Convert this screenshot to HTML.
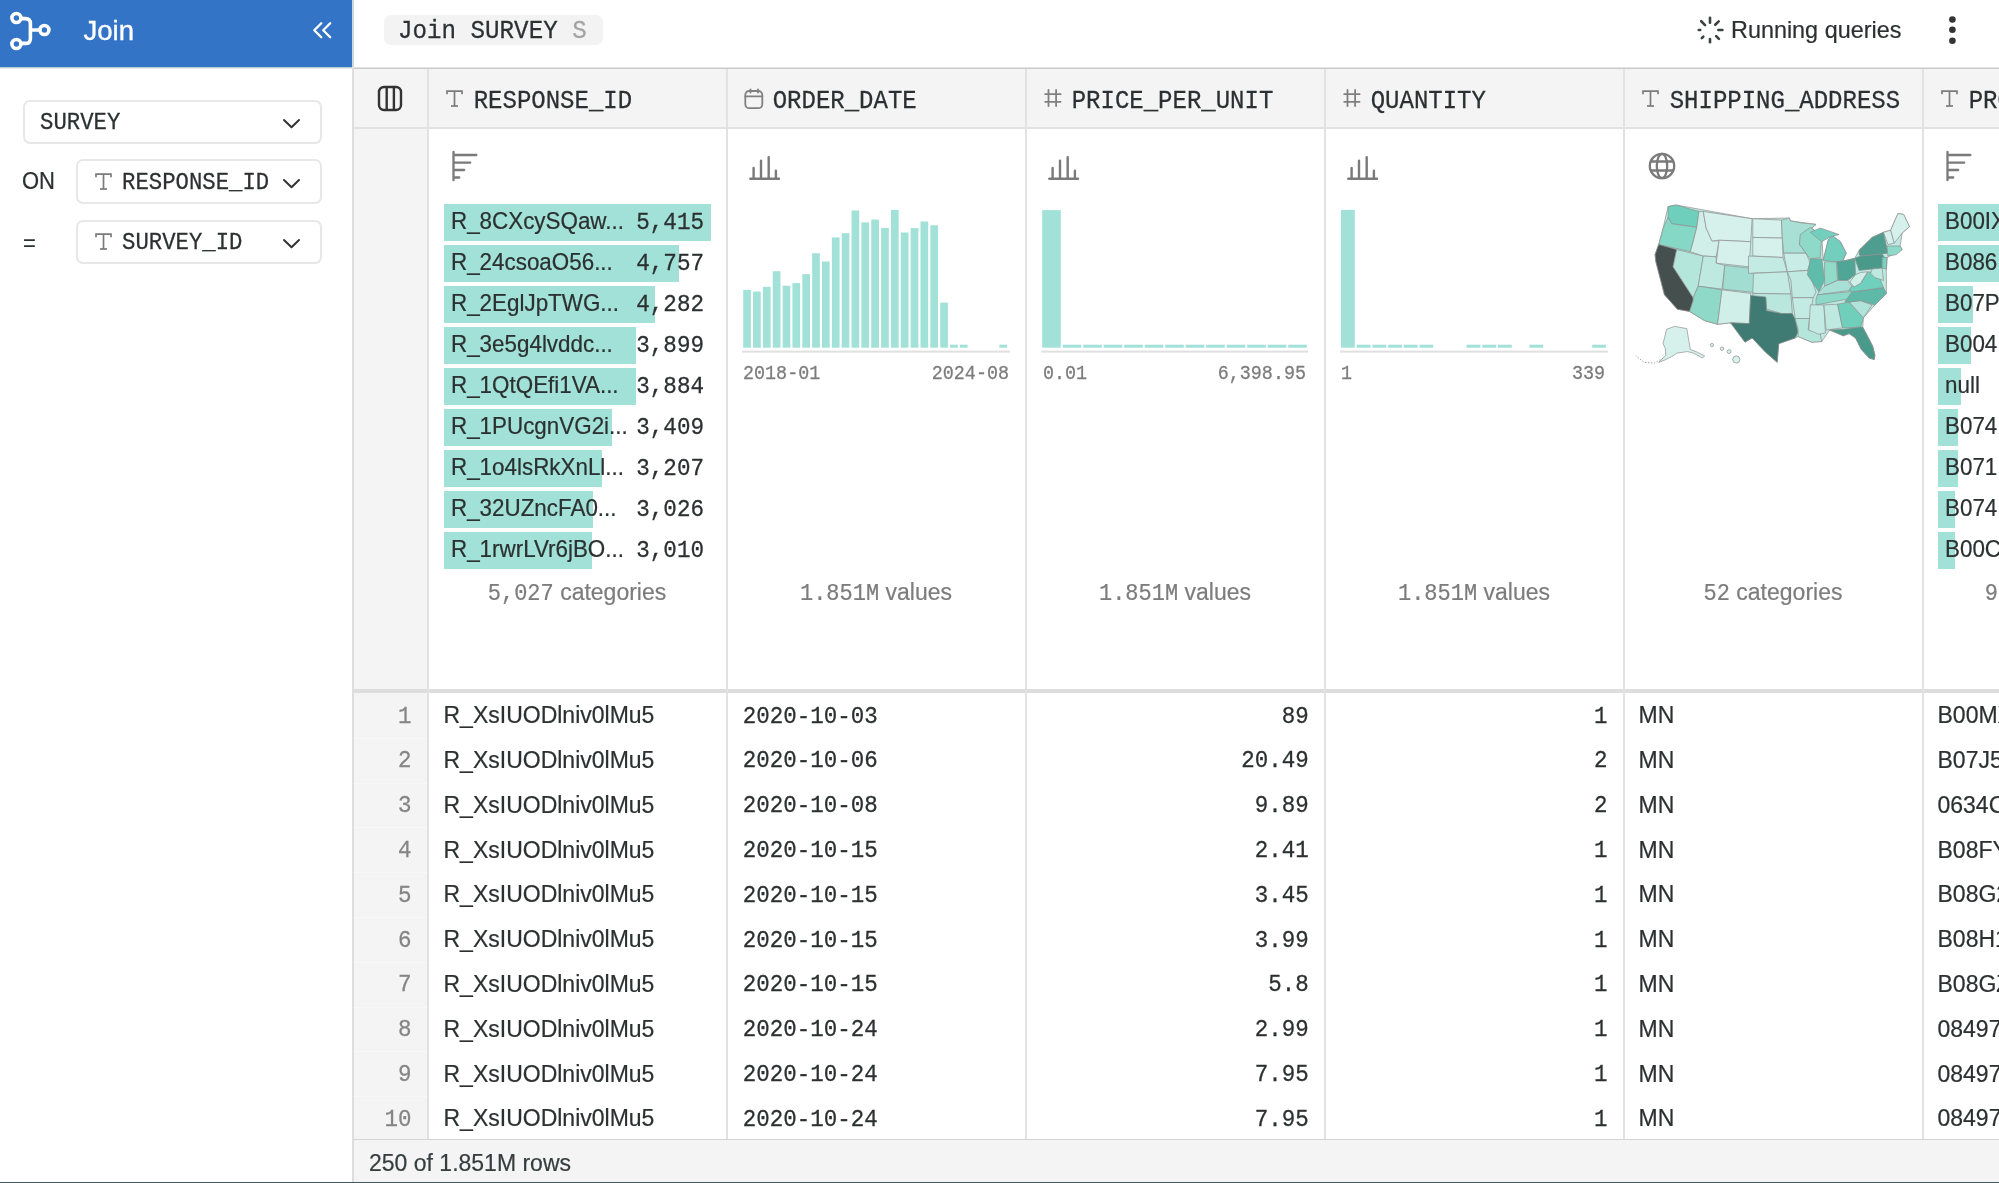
<!DOCTYPE html>
<html><head><meta charset="utf-8"><style>
html,body{margin:0;padding:0;}
body{width:1999px;height:1183px;overflow:hidden;position:relative;background:#fff;font-family:'Liberation Sans', sans-serif;}
.t{position:absolute;white-space:pre;}
.r{position:absolute;}
.s{position:absolute;overflow:visible;}
#root{position:absolute;left:0;top:0;width:1999px;height:1183px;overflow:hidden;will-change:transform;}
</style></head><body><div id="root">
<div class="r" style="left:0px;top:0px;width:352px;height:67px;background:#3474c6;"></div>
<div class="r" style="left:0px;top:67px;width:352px;height:1px;background:#b9d6d6;"></div>
<div class="r" style="left:0px;top:68px;width:352px;height:1px;background:#e6e6e6;"></div>
<div class="r" style="left:352px;top:67px;width:1647px;height:1px;background:#e4e4e4;"></div>
<div class="r" style="left:352px;top:68px;width:1647px;height:1px;background:#cacaca;"></div>
<div class="r" style="left:354px;top:69px;width:1645px;height:58px;background:#f4f4f4;"></div>
<div class="r" style="left:354px;top:127px;width:1645px;height:2px;background:#e2e2e2;"></div>
<div class="r" style="left:354px;top:129px;width:73px;height:1010px;background:#f4f4f4;"></div>
<div class="r" style="left:352px;top:68px;width:2px;height:1115px;background:#dedede;"></div>
<div class="r" style="left:352px;top:0px;width:1px;height:67px;background:#d6d6d6;"></div>
<div class="r" style="left:353px;top:0px;width:1px;height:67px;background:#bcdada;"></div>
<div class="r" style="left:354px;top:689px;width:1645px;height:4px;background:#dddddd;"></div>
<div class="r" style="left:427px;top:69px;width:2px;height:1070px;background:#e2e2e2;"></div>
<div class="r" style="left:726px;top:69px;width:2px;height:1070px;background:#e2e2e2;"></div>
<div class="r" style="left:1025px;top:69px;width:2px;height:1070px;background:#e2e2e2;"></div>
<div class="r" style="left:1324px;top:69px;width:2px;height:1070px;background:#e2e2e2;"></div>
<div class="r" style="left:1623px;top:69px;width:2px;height:1070px;background:#e2e2e2;"></div>
<div class="r" style="left:1922px;top:69px;width:2px;height:1070px;background:#e2e2e2;"></div>
<div class="r" style="left:354px;top:1139px;width:1645px;height:1px;background:#d4d4d4;"></div>
<div class="r" style="left:354px;top:1140px;width:1645px;height:42px;background:#f4f4f4;"></div>
<div class="r" style="left:0px;top:1182px;width:1999px;height:1px;background:#3e5960;"></div>
<svg class="s" style="left:0px;top:0px;" width="60" height="60" viewBox="0 0 60 60"><g fill="none" stroke="#fff" stroke-width="3.6" stroke-linecap="round"><circle cx="16.4" cy="18" r="4.5"/><circle cx="16.4" cy="44" r="4.5"/><circle cx="44.4" cy="30" r="4.5"/><path d="M21,18.6 H25.4 Q30.4,18.6 30.4,23.6 V38.4 Q30.4,43.4 25.4,43.4 H21 M30.4,30 H39.8"/></g></svg>
<div class="t" style="top:17.03px;font-size:27.6px;line-height:27.6px;font-family:'Liberation Sans', sans-serif;color:#ffffff;left:83.40px;-webkit-text-stroke:0.2px currentColor;transform:scaleY(1.05);transform-origin:0 23.37px;-webkit-text-stroke:0.35px #fff;transform:none;">Join</div>
<svg class="s" style="left:300px;top:15px;" width="40" height="30" viewBox="0 0 40 30"><g fill="none" stroke="#fff" stroke-width="2.3" stroke-linecap="round" stroke-linejoin="round"><path d="M21.3,8.2 L14.3,15.2 L21.3,22.2 M30.2,8.2 L23.2,15.2 L30.2,22.2"/></g></svg>
<div class="r" style="left:23px;top:100px;width:295px;height:40px;border:2px solid #e7e7e7;border-radius:7px;background:#fff"></div>
<div class="t" style="top:112.42px;font-size:22.3px;line-height:22.3px;font-family:'Liberation Mono', monospace;color:#2b3030;left:40.00px;transform:scaleY(1.08);transform-origin:0 17.08px;-webkit-text-stroke:0.25px currentColor;">SURVEY</div>
<svg class="s" style="left:281px;top:117px;" width="21" height="13" viewBox="0 0 21 13"><path d="M3,3 L10.5,10.2 L18,3" fill="none" stroke="#333" stroke-width="2" stroke-linecap="round" stroke-linejoin="round"/></svg>
<div class="t" style="top:171.17px;font-size:22px;line-height:22px;font-family:'Liberation Sans', sans-serif;color:#2b3030;left:22.00px;-webkit-text-stroke:0.2px currentColor;transform:scaleY(1.05);transform-origin:0 18.63px;">ON</div>
<div class="r" style="left:76px;top:159px;width:242px;height:41px;border:2px solid #e7e7e7;border-radius:7px;background:#fff"></div>
<svg class="s" style="left:94.5px;top:173px;" width="17" height="17" viewBox="0 0 17 17"><g fill="none" stroke="#7b7b7b" stroke-width="1.7"><path d="M1,4.2 V1.2 H16 V4.2"/><path d="M8.5,1.2 V16"/><path d="M5,16 H12"/></g></svg>
<div class="t" style="top:171.92px;font-size:22.3px;line-height:22.3px;font-family:'Liberation Mono', monospace;color:#2b3030;left:122.00px;transform:scaleY(1.08);transform-origin:0 17.08px;-webkit-text-stroke:0.25px currentColor;">RESPONSE_ID</div>
<svg class="s" style="left:281px;top:177px;" width="21" height="13" viewBox="0 0 21 13"><path d="M3,3 L10.5,10.2 L18,3" fill="none" stroke="#333" stroke-width="2" stroke-linecap="round" stroke-linejoin="round"/></svg>
<div class="t" style="top:233.17px;font-size:22px;line-height:22px;font-family:'Liberation Sans', sans-serif;color:#2b3030;left:23.00px;-webkit-text-stroke:0.2px currentColor;transform:scaleY(1.05);transform-origin:0 18.63px;">=</div>
<div class="r" style="left:76px;top:220px;width:242px;height:40px;border:2px solid #e7e7e7;border-radius:7px;background:#fff"></div>
<svg class="s" style="left:94.5px;top:233px;" width="17" height="17" viewBox="0 0 17 17"><g fill="none" stroke="#7b7b7b" stroke-width="1.7"><path d="M1,4.2 V1.2 H16 V4.2"/><path d="M8.5,1.2 V16"/><path d="M5,16 H12"/></g></svg>
<div class="t" style="top:232.22px;font-size:22.3px;line-height:22.3px;font-family:'Liberation Mono', monospace;color:#2b3030;left:122.00px;transform:scaleY(1.08);transform-origin:0 17.08px;-webkit-text-stroke:0.25px currentColor;">SURVEY_ID</div>
<svg class="s" style="left:281px;top:237px;" width="21" height="13" viewBox="0 0 21 13"><path d="M3,3 L10.5,10.2 L18,3" fill="none" stroke="#333" stroke-width="2" stroke-linecap="round" stroke-linejoin="round"/></svg>
<div class="r" style="left:384px;top:15px;width:219px;height:30px;background:#f3f3f3;border-radius:7px"></div>
<div class="t" style="top:19.96px;font-size:24.2px;line-height:24.2px;font-family:'Liberation Mono', monospace;color:#2b3030;left:398.00px;transform:scaleY(1.08);transform-origin:0 18.54px;-webkit-text-stroke:0.25px currentColor;">Join SURVEY <span style="color:#a3a3a3">S</span></div>
<svg class="s" style="left:1694.9px;top:14.9px;" width="30" height="30" viewBox="0 0 30 30"><g stroke="#3a4242" stroke-width="2.6" stroke-linecap="round"><line x1="15.00" y1="7.80" x2="15.00" y2="2.80"/><line x1="20.23" y1="9.77" x2="23.70" y2="6.30"/><line x1="23.30" y1="15.00" x2="27.40" y2="15.00"/><line x1="21.15" y1="21.15" x2="23.91" y2="23.91"/><line x1="15.00" y1="24.10" x2="15.00" y2="27.20"/><line x1="8.28" y1="21.72" x2="6.80" y2="23.20"/><line x1="5.20" y1="15.00" x2="3.80" y2="15.00"/><line x1="10.05" y1="10.05" x2="6.23" y2="6.23"/></g></svg>
<div class="t" style="top:18.79px;font-size:23.4px;line-height:23.4px;font-family:'Liberation Sans', sans-serif;color:#2b3030;left:1731.00px;-webkit-text-stroke:0.2px currentColor;transform:scaleY(1.05);transform-origin:0 19.81px;">Running queries</div>
<svg class="s" style="left:1945px;top:12px;" width="15" height="36" viewBox="0 0 15 36"><g fill="#333"><circle cx="7.4" cy="7.5" r="3.3"/><circle cx="7.4" cy="17.8" r="3.3"/><circle cx="7.4" cy="28.7" r="3.3"/></g></svg>
<svg class="s" style="left:375px;top:83px;" width="30" height="31" viewBox="0 0 30 31"><g fill="none" stroke="#333" stroke-width="2.4"><rect x="4" y="4" width="22" height="23" rx="5"/><path d="M11.7,4 V27 M18.9,4 V27"/></g></svg>
<svg class="s" style="left:445.8px;top:89.6px;" width="17" height="17" viewBox="0 0 17 17"><g fill="none" stroke="#7b7b7b" stroke-width="1.7"><path d="M1,4.2 V1.2 H16 V4.2"/><path d="M8.5,1.2 V16"/><path d="M5,16 H12"/></g></svg>
<div class="t" style="top:90.01px;font-size:24px;line-height:24px;font-family:'Liberation Mono', monospace;color:#2b3030;left:473.70px;transform:scaleY(1.08);transform-origin:0 18.39px;-webkit-text-stroke:0.25px currentColor;">RESPONSE_ID</div>
<svg class="s" style="left:742.6px;top:87.8px;" width="22" height="22" viewBox="0 0 22 22"><g fill="none" stroke="#808080" stroke-width="1.8" stroke-linecap="round"><rect x="2.3" y="3" width="17" height="17.2" rx="4"/><path d="M2.3,8.4 H19.3 M7.5,1.3 V4.5 M15,1.3 V4.5"/></g></svg>
<div class="t" style="top:90.01px;font-size:24px;line-height:24px;font-family:'Liberation Mono', monospace;color:#2b3030;left:772.70px;transform:scaleY(1.08);transform-origin:0 18.39px;-webkit-text-stroke:0.25px currentColor;">ORDER_DATE</div>
<svg class="s" style="left:1044px;top:88px;" width="20" height="20" viewBox="0 0 20 20"><g fill="none" stroke="#808080" stroke-width="1.8" stroke-linecap="round"><path d="M4.5,2 V18 M12.1,2 V18 M1.2,6.2 H16.6 M1.2,13.8 H16.6"/></g></svg>
<div class="t" style="top:90.01px;font-size:24px;line-height:24px;font-family:'Liberation Mono', monospace;color:#2b3030;left:1071.70px;transform:scaleY(1.08);transform-origin:0 18.39px;-webkit-text-stroke:0.25px currentColor;">PRICE_PER_UNIT</div>
<svg class="s" style="left:1343px;top:88px;" width="20" height="20" viewBox="0 0 20 20"><g fill="none" stroke="#808080" stroke-width="1.8" stroke-linecap="round"><path d="M4.5,2 V18 M12.1,2 V18 M1.2,6.2 H16.6 M1.2,13.8 H16.6"/></g></svg>
<div class="t" style="top:90.01px;font-size:24px;line-height:24px;font-family:'Liberation Mono', monospace;color:#2b3030;left:1370.70px;transform:scaleY(1.08);transform-origin:0 18.39px;-webkit-text-stroke:0.25px currentColor;">QUANTITY</div>
<svg class="s" style="left:1641.8px;top:89.6px;" width="17" height="17" viewBox="0 0 17 17"><g fill="none" stroke="#7b7b7b" stroke-width="1.7"><path d="M1,4.2 V1.2 H16 V4.2"/><path d="M8.5,1.2 V16"/><path d="M5,16 H12"/></g></svg>
<div class="t" style="top:90.01px;font-size:24px;line-height:24px;font-family:'Liberation Mono', monospace;color:#2b3030;left:1669.70px;transform:scaleY(1.08);transform-origin:0 18.39px;-webkit-text-stroke:0.25px currentColor;">SHIPPING_ADDRESS</div>
<svg class="s" style="left:1940.8px;top:89.6px;" width="17" height="17" viewBox="0 0 17 17"><g fill="none" stroke="#7b7b7b" stroke-width="1.7"><path d="M1,4.2 V1.2 H16 V4.2"/><path d="M8.5,1.2 V16"/><path d="M5,16 H12"/></g></svg>
<div class="t" style="top:90.01px;font-size:24px;line-height:24px;font-family:'Liberation Mono', monospace;color:#2b3030;left:1968.70px;transform:scaleY(1.08);transform-origin:0 18.39px;-webkit-text-stroke:0.25px currentColor;">PRODUCT_CODE</div>
<svg class="s" style="left:451px;top:150px;" width="30" height="32" viewBox="0 0 30 32"><g fill="none" stroke="#7a7a7a" stroke-width="2.3" stroke-linecap="round"><path d="M2.5,1.8 V30.2 M2.5,5 H25.35 M2.5,12.6 H19.25 M2.5,20 H13.15 M2.5,27.5 H8.25"/></g></svg>
<svg class="s" style="left:749px;top:156px;" width="32" height="26" viewBox="0 0 32 26"><g fill="none" stroke="#7a7a7a" stroke-width="2.4" stroke-linecap="round"><path d="M1.3,22.7 H30 M4.6,22.7 V12 M12,22.7 V4.7 M19.7,22.7 V1.1 M26.9,22.7 V14.7"/></g></svg>
<svg class="s" style="left:1048px;top:156px;" width="32" height="26" viewBox="0 0 32 26"><g fill="none" stroke="#7a7a7a" stroke-width="2.4" stroke-linecap="round"><path d="M1.3,22.7 H30 M4.6,22.7 V12 M12,22.7 V4.7 M19.7,22.7 V1.1 M26.9,22.7 V14.7"/></g></svg>
<svg class="s" style="left:1347px;top:156px;" width="32" height="26" viewBox="0 0 32 26"><g fill="none" stroke="#7a7a7a" stroke-width="2.4" stroke-linecap="round"><path d="M1.3,22.7 H30 M4.6,22.7 V12 M12,22.7 V4.7 M19.7,22.7 V1.1 M26.9,22.7 V14.7"/></g></svg>
<svg class="s" style="left:1646.5px;top:151.3px;" width="30" height="30" viewBox="0 0 30 30"><g fill="none" stroke="#7a7a7a" stroke-width="2.3"><circle cx="15" cy="15" r="12.2"/><ellipse cx="15" cy="15" rx="5.2" ry="12.2"/><path d="M3.5,10.5 H26.5 M3.5,19.5 H26.5"/></g></svg>
<svg class="s" style="left:1945px;top:150px;" width="30" height="32" viewBox="0 0 30 32"><g fill="none" stroke="#7a7a7a" stroke-width="2.3" stroke-linecap="round"><path d="M2.5,1.8 V30.2 M2.5,5 H25.35 M2.5,12.6 H19.25 M2.5,20 H13.15 M2.5,27.5 H8.25"/></g></svg>
<div class="r" style="left:444px;top:204px;width:267.0px;height:37px;background:#a2e1d7;"></div>
<div class="t" style="top:211.03px;font-size:22.4px;line-height:22.4px;font-family:'Liberation Sans', sans-serif;color:#2b3030;left:451.00px;-webkit-text-stroke:0.2px currentColor;transform:scaleY(1.05);transform-origin:0 18.97px;">R_8CXcySQaw...</div>
<div class="t" style="top:211.89px;font-size:22.6px;line-height:22.6px;font-family:'Liberation Mono', monospace;color:#2b3030;right:1295.00px;text-align:right;transform:scaleY(1.08);transform-origin:0 17.31px;-webkit-text-stroke:0.25px currentColor;">5,415</div>
<div class="r" style="left:444px;top:245px;width:234.6px;height:37px;background:#a2e1d7;"></div>
<div class="t" style="top:252.03px;font-size:22.4px;line-height:22.4px;font-family:'Liberation Sans', sans-serif;color:#2b3030;left:451.00px;-webkit-text-stroke:0.2px currentColor;transform:scaleY(1.05);transform-origin:0 18.97px;">R_24csoaO56...</div>
<div class="t" style="top:252.89px;font-size:22.6px;line-height:22.6px;font-family:'Liberation Mono', monospace;color:#2b3030;right:1295.00px;text-align:right;transform:scaleY(1.08);transform-origin:0 17.31px;-webkit-text-stroke:0.25px currentColor;">4,757</div>
<div class="r" style="left:444px;top:286px;width:211.1px;height:37px;background:#a2e1d7;"></div>
<div class="t" style="top:293.03px;font-size:22.4px;line-height:22.4px;font-family:'Liberation Sans', sans-serif;color:#2b3030;left:451.00px;-webkit-text-stroke:0.2px currentColor;transform:scaleY(1.05);transform-origin:0 18.97px;">R_2EglJpTWG...</div>
<div class="t" style="top:293.89px;font-size:22.6px;line-height:22.6px;font-family:'Liberation Mono', monospace;color:#2b3030;right:1295.00px;text-align:right;transform:scaleY(1.08);transform-origin:0 17.31px;-webkit-text-stroke:0.25px currentColor;">4,282</div>
<div class="r" style="left:444px;top:327px;width:192.2px;height:37px;background:#a2e1d7;"></div>
<div class="t" style="top:334.03px;font-size:22.4px;line-height:22.4px;font-family:'Liberation Sans', sans-serif;color:#2b3030;left:451.00px;-webkit-text-stroke:0.2px currentColor;transform:scaleY(1.05);transform-origin:0 18.97px;">R_3e5g4lvddc...</div>
<div class="t" style="top:334.89px;font-size:22.6px;line-height:22.6px;font-family:'Liberation Mono', monospace;color:#2b3030;right:1295.00px;text-align:right;transform:scaleY(1.08);transform-origin:0 17.31px;-webkit-text-stroke:0.25px currentColor;">3,899</div>
<div class="r" style="left:444px;top:368px;width:191.5px;height:37px;background:#a2e1d7;"></div>
<div class="t" style="top:375.03px;font-size:22.4px;line-height:22.4px;font-family:'Liberation Sans', sans-serif;color:#2b3030;left:451.00px;-webkit-text-stroke:0.2px currentColor;transform:scaleY(1.05);transform-origin:0 18.97px;">R_1QtQEfi1VA...</div>
<div class="t" style="top:375.89px;font-size:22.6px;line-height:22.6px;font-family:'Liberation Mono', monospace;color:#2b3030;right:1295.00px;text-align:right;transform:scaleY(1.08);transform-origin:0 17.31px;-webkit-text-stroke:0.25px currentColor;">3,884</div>
<div class="r" style="left:444px;top:409px;width:168.1px;height:37px;background:#a2e1d7;"></div>
<div class="t" style="top:416.03px;font-size:22.4px;line-height:22.4px;font-family:'Liberation Sans', sans-serif;color:#2b3030;left:451.00px;-webkit-text-stroke:0.2px currentColor;transform:scaleY(1.05);transform-origin:0 18.97px;">R_1PUcgnVG2i...</div>
<div class="t" style="top:416.89px;font-size:22.6px;line-height:22.6px;font-family:'Liberation Mono', monospace;color:#2b3030;right:1295.00px;text-align:right;transform:scaleY(1.08);transform-origin:0 17.31px;-webkit-text-stroke:0.25px currentColor;">3,409</div>
<div class="r" style="left:444px;top:450px;width:158.1px;height:37px;background:#a2e1d7;"></div>
<div class="t" style="top:457.03px;font-size:22.4px;line-height:22.4px;font-family:'Liberation Sans', sans-serif;color:#2b3030;left:451.00px;-webkit-text-stroke:0.2px currentColor;transform:scaleY(1.05);transform-origin:0 18.97px;">R_1o4lsRkXnLl...</div>
<div class="t" style="top:457.89px;font-size:22.6px;line-height:22.6px;font-family:'Liberation Mono', monospace;color:#2b3030;right:1295.00px;text-align:right;transform:scaleY(1.08);transform-origin:0 17.31px;-webkit-text-stroke:0.25px currentColor;">3,207</div>
<div class="r" style="left:444px;top:491px;width:149.2px;height:37px;background:#a2e1d7;"></div>
<div class="t" style="top:498.03px;font-size:22.4px;line-height:22.4px;font-family:'Liberation Sans', sans-serif;color:#2b3030;left:451.00px;-webkit-text-stroke:0.2px currentColor;transform:scaleY(1.05);transform-origin:0 18.97px;">R_32UZncFA0...</div>
<div class="t" style="top:498.89px;font-size:22.6px;line-height:22.6px;font-family:'Liberation Mono', monospace;color:#2b3030;right:1295.00px;text-align:right;transform:scaleY(1.08);transform-origin:0 17.31px;-webkit-text-stroke:0.25px currentColor;">3,026</div>
<div class="r" style="left:444px;top:532px;width:148.4px;height:37px;background:#a2e1d7;"></div>
<div class="t" style="top:539.03px;font-size:22.4px;line-height:22.4px;font-family:'Liberation Sans', sans-serif;color:#2b3030;left:451.00px;-webkit-text-stroke:0.2px currentColor;transform:scaleY(1.05);transform-origin:0 18.97px;">R_1rwrLVr6jBO...</div>
<div class="t" style="top:539.89px;font-size:22.6px;line-height:22.6px;font-family:'Liberation Mono', monospace;color:#2b3030;right:1295.00px;text-align:right;transform:scaleY(1.08);transform-origin:0 17.31px;-webkit-text-stroke:0.25px currentColor;">3,010</div>
<div class="t" style="top:581.33px;font-size:23px;line-height:23px;font-family:'Liberation Sans', sans-serif;color:#7c7c7c;left:77.00px;width:1000px;text-align:center;-webkit-text-stroke:0.2px currentColor;transform:scaleY(1.05);transform-origin:0 19.47px;"><span style="font-family:'Liberation Mono', monospace;font-size:22px">5,027</span> categories</div>
<div class="t" style="top:581.33px;font-size:23px;line-height:23px;font-family:'Liberation Sans', sans-serif;color:#7c7c7c;left:376.00px;width:1000px;text-align:center;-webkit-text-stroke:0.2px currentColor;transform:scaleY(1.05);transform-origin:0 19.47px;"><span style="font-family:'Liberation Mono', monospace;font-size:22px">1.851M</span> values</div>
<div class="t" style="top:581.33px;font-size:23px;line-height:23px;font-family:'Liberation Sans', sans-serif;color:#7c7c7c;left:675.00px;width:1000px;text-align:center;-webkit-text-stroke:0.2px currentColor;transform:scaleY(1.05);transform-origin:0 19.47px;"><span style="font-family:'Liberation Mono', monospace;font-size:22px">1.851M</span> values</div>
<div class="t" style="top:581.33px;font-size:23px;line-height:23px;font-family:'Liberation Sans', sans-serif;color:#7c7c7c;left:974.00px;width:1000px;text-align:center;-webkit-text-stroke:0.2px currentColor;transform:scaleY(1.05);transform-origin:0 19.47px;"><span style="font-family:'Liberation Mono', monospace;font-size:22px">1.851M</span> values</div>
<div class="t" style="top:581.33px;font-size:23px;line-height:23px;font-family:'Liberation Sans', sans-serif;color:#7c7c7c;left:1273.00px;width:1000px;text-align:center;-webkit-text-stroke:0.2px currentColor;transform:scaleY(1.05);transform-origin:0 19.47px;"><span style="font-family:'Liberation Mono', monospace;font-size:22px">52</span> categories</div>
<div class="t" style="top:581.33px;font-size:23px;line-height:23px;font-family:'Liberation Sans', sans-serif;color:#7c7c7c;left:1574.00px;width:1000px;text-align:center;-webkit-text-stroke:0.2px currentColor;transform:scaleY(1.05);transform-origin:0 19.47px;"><span style="font-family:'Liberation Mono', monospace;font-size:22px">9,876</span> categories</div>
<svg class="s" style="left:742px;top:200px;" width="268" height="160" viewBox="0 0 268 160"><g fill="#a2e1d7"><rect x="1.20" y="89.90" width="7.7" height="57.80"/><rect x="11.05" y="91.60" width="7.7" height="56.10"/><rect x="20.90" y="86.80" width="7.7" height="60.90"/><rect x="30.75" y="71.20" width="7.7" height="76.50"/><rect x="40.60" y="85.70" width="7.7" height="62.00"/><rect x="50.45" y="83.10" width="7.7" height="64.60"/><rect x="60.30" y="74.10" width="7.7" height="73.60"/><rect x="70.15" y="53.20" width="7.7" height="94.50"/><rect x="80.00" y="61.50" width="7.7" height="86.20"/><rect x="89.85" y="37.40" width="7.7" height="110.30"/><rect x="99.70" y="33.20" width="7.7" height="114.50"/><rect x="109.55" y="10.50" width="7.7" height="137.20"/><rect x="119.40" y="22.40" width="7.7" height="125.30"/><rect x="129.25" y="19.60" width="7.7" height="128.10"/><rect x="139.10" y="27.90" width="7.7" height="119.80"/><rect x="148.95" y="9.90" width="7.7" height="137.80"/><rect x="158.80" y="32.50" width="7.7" height="115.20"/><rect x="168.65" y="28.10" width="7.7" height="119.60"/><rect x="178.50" y="21.50" width="7.7" height="126.20"/><rect x="188.35" y="25.30" width="7.7" height="122.40"/><rect x="198.20" y="102.60" width="7.7" height="45.10"/><rect x="208.05" y="144.70" width="7.7" height="3.00"/><rect x="217.90" y="144.70" width="7.7" height="3.00"/><rect x="257.30" y="144.70" width="7.7" height="3.00"/></g><rect x="0" y="150.6" width="268" height="2" fill="#e0e0e0"/></svg>
<div class="t" style="top:365.50px;font-size:18.4px;line-height:18.4px;font-family:'Liberation Mono', monospace;color:#7c7c7c;left:743.00px;transform:scaleY(1.08);transform-origin:0 14.10px;-webkit-text-stroke:0.25px currentColor;">2018-01</div>
<div class="t" style="top:365.50px;font-size:18.4px;line-height:18.4px;font-family:'Liberation Mono', monospace;color:#7c7c7c;right:990.00px;text-align:right;transform:scaleY(1.08);transform-origin:0 14.10px;-webkit-text-stroke:0.25px currentColor;">2024-08</div>
<svg class="s" style="left:1041px;top:200px;" width="267" height="160" viewBox="0 0 267 160"><g fill="#a2e1d7"><rect x="1.20" y="10.10" width="18.6" height="137.60"/><rect x="21.70" y="144.70" width="18.6" height="3.00"/><rect x="42.20" y="144.70" width="18.6" height="3.00"/><rect x="62.70" y="144.70" width="18.6" height="3.00"/><rect x="83.20" y="144.70" width="18.6" height="3.00"/><rect x="103.70" y="144.70" width="18.6" height="3.00"/><rect x="124.20" y="144.70" width="18.6" height="3.00"/><rect x="144.70" y="144.70" width="18.6" height="3.00"/><rect x="165.20" y="144.70" width="18.6" height="3.00"/><rect x="185.70" y="144.70" width="18.6" height="3.00"/><rect x="206.20" y="144.70" width="18.6" height="3.00"/><rect x="226.70" y="144.70" width="18.6" height="3.00"/><rect x="247.20" y="144.70" width="18.6" height="3.00"/></g><rect x="0" y="150.6" width="267" height="2" fill="#e0e0e0"/></svg>
<div class="t" style="top:365.50px;font-size:18.4px;line-height:18.4px;font-family:'Liberation Mono', monospace;color:#7c7c7c;left:1043.00px;transform:scaleY(1.08);transform-origin:0 14.10px;-webkit-text-stroke:0.25px currentColor;">0.01</div>
<div class="t" style="top:365.50px;font-size:18.4px;line-height:18.4px;font-family:'Liberation Mono', monospace;color:#7c7c7c;right:693.00px;text-align:right;transform:scaleY(1.08);transform-origin:0 14.10px;-webkit-text-stroke:0.25px currentColor;">6,398.95</div>
<svg class="s" style="left:1340px;top:200px;" width="268" height="160" viewBox="0 0 268 160"><g fill="#a2e1d7"><rect x="1.00" y="9.90" width="13.8" height="137.80"/><rect x="16.70" y="144.70" width="13.8" height="3.00"/><rect x="32.40" y="144.70" width="13.8" height="3.00"/><rect x="48.10" y="144.70" width="13.8" height="3.00"/><rect x="63.80" y="144.70" width="13.8" height="3.00"/><rect x="79.50" y="144.70" width="13.8" height="3.00"/><rect x="126.60" y="144.70" width="13.8" height="3.00"/><rect x="142.30" y="144.70" width="13.8" height="3.00"/><rect x="158.00" y="144.70" width="13.8" height="3.00"/><rect x="189.40" y="144.70" width="13.8" height="3.00"/><rect x="252.20" y="144.70" width="13.8" height="3.00"/></g><rect x="0" y="150.6" width="268" height="2" fill="#e0e0e0"/></svg>
<div class="t" style="top:365.50px;font-size:18.4px;line-height:18.4px;font-family:'Liberation Mono', monospace;color:#7c7c7c;left:1341.00px;transform:scaleY(1.08);transform-origin:0 14.10px;-webkit-text-stroke:0.25px currentColor;">1</div>
<div class="t" style="top:365.50px;font-size:18.4px;line-height:18.4px;font-family:'Liberation Mono', monospace;color:#7c7c7c;right:394.00px;text-align:right;transform:scaleY(1.08);transform-origin:0 14.10px;-webkit-text-stroke:0.25px currentColor;">339</div>
<svg class="s" style="left:1625px;top:140px;" width="300" height="240" viewBox="1625 140 300 240"><polygon fill="#bde9e0" stroke="#8f8f8f" stroke-width="0.7" points="1668.1,206.5 1676.0,205.0 1752.1,218.7 1789.4,218.0 1790.2,220.8 1816.0,224.4 1806.0,233.0 1800.2,238.8 1810.3,227.3 1821.8,235.9 1823.2,260.3 1828.2,240.2 1831.8,235.2 1840.4,241.7 1846.2,253.2 1842.6,261.1 1854.8,258.2 1859.1,250.3 1872.1,237.4 1883.5,232.3 1890.7,230.2 1897.9,213.6 1903.7,214.4 1909.4,226.6 1902.2,233.0 1900.1,246.0 1902.2,249.6 1887.1,257.5 1886.4,269.0 1886.4,293.4 1874.9,304.9 1863.4,317.8 1862.7,327.1 1867.7,336.5 1872.8,346.5 1874.9,355.2 1874.2,359.5 1869.2,358.0 1861.3,349.4 1855.5,337.9 1849.1,333.6 1843.3,335.8 1829.7,330.0 1821.8,341.5 1811.7,342.2 1798.1,336.5 1795.2,337.9 1778.7,343.7 1777.2,362.3 1765.7,352.3 1752.1,337.9 1745.0,342.2 1730.6,322.8 1717.6,324.3 1704.7,320.7 1689.6,311.4 1677.4,309.2 1664.5,294.8 1655.9,261.8 1655.1,254.6 1658.7,244.5 1663.0,228.7"/><g stroke="#8f8f8f" stroke-width="0.7" stroke-linejoin="round"><polygon fill="#6dcfbc" points="1668.1,206.5 1676.0,205.0 1699.0,211.5 1696.8,227.3 1671.7,223.7 1668.1,217.2"/><polygon fill="#85d8c6" points="1668.1,217.2 1671.7,223.7 1696.8,227.3 1693.2,241.7 1690.3,251.7 1658.7,244.5 1659.5,241.7 1663.0,228.7"/><polygon fill="#444f4e" points="1658.7,244.5 1676.7,249.6 1673.1,266.8 1693.2,297.7 1693.2,300.6 1689.6,311.4 1677.4,309.2 1664.5,294.8 1655.9,261.8 1655.1,254.6"/><polygon fill="#b5e6dc" points="1676.7,249.6 1703.3,256.0 1698.2,286.2 1693.2,297.7 1673.1,266.8"/><polygon fill="#d0efe9" points="1699.0,211.5 1703.3,211.5 1706.1,228.0 1711.9,240.9 1719.1,240.9 1716.2,256.8 1703.3,256.0 1690.3,251.7 1693.2,241.7 1696.8,227.3"/><polygon fill="#d6f1ec" points="1703.3,211.5 1752.1,218.7 1750.7,241.7 1719.1,240.2 1711.9,240.9 1706.1,228.0"/><polygon fill="#d6f1ec" points="1719.1,240.2 1750.7,241.7 1749.3,266.8 1716.2,263.2"/><polygon fill="#bde9e0" points="1703.3,256.0 1716.2,256.8 1716.2,263.2 1724.8,265.4 1722.0,289.1 1698.2,286.2"/><polygon fill="#a2ddd1" points="1724.8,265.4 1757.2,269.0 1756.4,292.7 1722.7,289.1"/><polygon fill="#8fd9c8" points="1698.2,286.2 1722.0,289.8 1717.6,324.3 1704.7,320.7 1689.6,311.4 1693.2,300.6 1693.2,297.7"/><polygon fill="#d0efe9" points="1722.0,289.8 1750.7,293.4 1749.3,323.6 1730.6,322.8 1717.6,324.3"/><polygon fill="#d6f1ec" points="1752.8,218.7 1781.5,220.1 1782.3,238.1 1752.8,237.4"/><polygon fill="#d6f1ec" points="1752.8,237.4 1782.3,238.1 1783.0,257.5 1752.8,256.0"/><polygon fill="#c3ebe3" points="1748.5,256.0 1783.0,257.5 1787.3,271.8 1748.5,273.3"/><polygon fill="#c3ebe3" points="1753.5,273.3 1787.3,271.8 1790.9,294.1 1752.8,293.4"/><polygon fill="#b9e7de" points="1752.8,293.4 1790.9,294.1 1792.3,313.5 1781.5,313.5 1766.5,309.2 1765.7,297.7 1752.8,296.5"/><polygon fill="#3f7b72" points="1750.7,295.5 1765.8,297.0 1766.5,310.6 1781.5,313.5 1792.3,313.5 1795.2,319.2 1798.1,332.2 1795.2,337.9 1778.7,343.7 1777.2,362.3 1765.7,352.3 1752.1,337.9 1745.0,342.2 1730.6,322.8 1749.3,323.6"/><polygon fill="#a9e0d5" points="1781.5,220.1 1789.4,218.0 1790.2,220.8 1801.7,223.0 1816.0,224.4 1806.0,233.0 1800.2,238.8 1799.5,244.5 1806.0,253.2 1783.7,253.2 1782.3,238.1"/><polygon fill="#c8ede6" points="1783.7,253.2 1806.0,253.2 1810.3,263.2 1807.4,270.4 1787.3,271.8"/><polygon fill="#bfe9e1" points="1787.3,271.8 1807.4,270.4 1810.3,276.1 1816.0,291.9 1813.2,297.7 1792.3,297.7 1790.9,280.4"/><polygon fill="#c3ebe3" points="1792.3,297.7 1813.2,297.7 1809.6,318.5 1795.2,318.5"/><polygon fill="#b5e6dc" points="1795.2,318.5 1809.6,318.5 1808.1,330.0 1819.6,331.4 1821.8,341.5 1811.7,342.2 1798.1,336.5 1798.1,329.3"/><polygon fill="#8fd9c8" points="1799.5,244.5 1800.2,234.5 1810.3,227.3 1821.8,235.9 1820.3,257.5 1810.3,258.9 1806.0,253.2"/><polygon fill="#5fbcab" points="1810.3,258.9 1821.8,258.9 1824.6,280.4 1818.9,291.9 1807.4,274.7"/><polygon fill="#73cfbd" points="1823.2,260.3 1828.2,240.2 1831.8,235.2 1840.4,241.7 1846.2,253.2 1842.6,261.1 1836.1,261.8"/><polygon fill="#73cfbd" points="1810.3,232.3 1820.3,228.0 1839.0,234.5 1829.0,237.4 1821.8,241.7"/><polygon fill="#90dcc9" points="1824.6,261.8 1836.1,261.8 1837.6,280.4 1824.6,286.2"/><polygon fill="#4fa596" points="1836.9,261.8 1847.6,260.3 1854.8,258.2 1855.5,274.7 1847.6,280.4 1838.3,280.4"/><polygon fill="#a9e0d5" points="1818.9,291.9 1824.6,286.2 1837.6,280.4 1847.6,280.4 1851.9,286.2 1849.1,290.5 1817.5,294.8"/><polygon fill="#8dd9c8" points="1816.0,299.1 1817.5,294.8 1854.8,291.2 1847.6,299.1 1816.0,304.9"/><polygon fill="#c3ebe3" points="1810.3,304.9 1823.9,304.9 1825.4,332.9 1818.9,334.3 1808.8,330.0"/><polygon fill="#bde9e0" points="1823.9,304.9 1837.6,304.2 1842.6,327.9 1826.1,330.0"/><polygon fill="#6fcfbb" points="1837.6,304.2 1849.1,302.0 1863.4,317.8 1860.6,327.1 1842.6,327.9"/><polygon fill="#4a9a8b" points="1829.7,330.0 1843.3,329.3 1860.6,327.1 1862.7,327.1 1867.7,336.5 1872.8,346.5 1874.9,355.2 1874.2,359.5 1869.2,358.0 1861.3,349.4 1855.5,337.9 1849.1,333.6 1843.3,335.8"/><polygon fill="#b0e4da" points="1849.1,302.0 1860.6,300.6 1872.1,304.9 1863.4,317.8"/><polygon fill="#5fb9a9" points="1844.8,302.0 1851.9,291.9 1883.5,287.6 1886.4,293.4 1874.9,304.9 1860.6,300.6 1849.1,302.0"/><polygon fill="#6fd0bd" points="1849.1,290.5 1851.9,286.2 1860.6,283.3 1868.5,271.8 1877.8,273.3 1883.5,287.6 1851.9,291.9"/><polygon fill="#d0efe9" points="1849.8,281.9 1855.5,274.7 1860.6,272.5 1867.7,271.8 1860.6,283.3 1854.1,286.9"/><polygon fill="#4a9a8b" points="1854.8,258.2 1860.6,256.0 1882.1,253.9 1886.4,260.3 1886.4,267.5 1859.1,270.4"/><polygon fill="#4f9d8f" points="1859.1,250.3 1872.1,237.4 1883.5,232.3 1887.9,253.2 1882.1,253.9 1860.6,256.0 1859.1,254.6"/><polygon fill="#d6f1ec" points="1883.5,232.3 1890.7,230.2 1894.3,243.1 1887.9,244.5"/><polygon fill="#d6f1ec" points="1890.7,230.2 1897.9,213.6 1903.7,214.4 1909.4,226.6 1902.2,233.0 1894.3,243.1"/><polygon fill="#8fd9c8" points="1887.1,246.0 1900.1,246.0 1902.2,249.6 1896.5,254.6 1887.9,256.0"/><polygon fill="#77d2be" points="1882.1,257.5 1887.1,257.5 1886.4,269.0 1882.1,268.2"/><polygon fill="#bde9e0" points="1872.1,269.0 1882.1,268.2 1883.5,280.4 1874.9,277.6 1870.6,273.3"/><polygon fill="#d6f1ec" points="1666.6,329.3 1674.5,326.4 1686.8,328.6 1690.3,349.4 1697.5,352.3 1704.7,355.9 1702.6,358.0 1693.2,353.0 1687.5,351.6 1677.4,353.0 1671.7,356.6 1664.5,360.2 1658.7,362.4 1665.9,355.2 1665.2,348.0 1663.0,343.7 1664.5,337.9"/><circle fill="#d6f1ec" cx="1711.9" cy="345.1" r="1.7"/><circle fill="#d6f1ec" cx="1722.0" cy="348.7" r="1.7"/><circle fill="#d6f1ec" cx="1729.1" cy="351.6" r="2.0"/><circle fill="#d6f1ec" cx="1736.3" cy="359.5" r="3.6"/><polyline fill="none" stroke="#9a9a9a" stroke-width="0.9" stroke-dasharray="1.5,1.5" points="1663.0,358.0 1654.4,363.1 1644.4,362.4 1635.7,355.9"/></g></svg>
<div class="r" style="left:1938px;top:204px;width:80px;height:37px;background:#a2e1d7;"></div>
<div class="t" style="top:211.03px;font-size:22.4px;line-height:22.4px;font-family:'Liberation Sans', sans-serif;color:#2b3030;left:1945.00px;-webkit-text-stroke:0.2px currentColor;transform:scaleY(1.05);transform-origin:0 18.97px;">B00IX</div>
<div class="r" style="left:1938px;top:245px;width:80px;height:37px;background:#a2e1d7;"></div>
<div class="t" style="top:252.03px;font-size:22.4px;line-height:22.4px;font-family:'Liberation Sans', sans-serif;color:#2b3030;left:1945.00px;-webkit-text-stroke:0.2px currentColor;transform:scaleY(1.05);transform-origin:0 18.97px;">B086</div>
<div class="r" style="left:1938px;top:286px;width:34.8px;height:37px;background:#a2e1d7;"></div>
<div class="t" style="top:293.03px;font-size:22.4px;line-height:22.4px;font-family:'Liberation Sans', sans-serif;color:#2b3030;left:1945.00px;-webkit-text-stroke:0.2px currentColor;transform:scaleY(1.05);transform-origin:0 18.97px;">B07P</div>
<div class="r" style="left:1938px;top:327px;width:33px;height:37px;background:#a2e1d7;"></div>
<div class="t" style="top:334.03px;font-size:22.4px;line-height:22.4px;font-family:'Liberation Sans', sans-serif;color:#2b3030;left:1945.00px;-webkit-text-stroke:0.2px currentColor;transform:scaleY(1.05);transform-origin:0 18.97px;">B004</div>
<div class="r" style="left:1938px;top:368px;width:22.8px;height:37px;background:#a2e1d7;"></div>
<div class="t" style="top:375.03px;font-size:22.4px;line-height:22.4px;font-family:'Liberation Sans', sans-serif;color:#2b3030;left:1945.00px;-webkit-text-stroke:0.2px currentColor;transform:scaleY(1.05);transform-origin:0 18.97px;">null</div>
<div class="r" style="left:1938px;top:409px;width:19.5px;height:37px;background:#a2e1d7;"></div>
<div class="t" style="top:416.03px;font-size:22.4px;line-height:22.4px;font-family:'Liberation Sans', sans-serif;color:#2b3030;left:1945.00px;-webkit-text-stroke:0.2px currentColor;transform:scaleY(1.05);transform-origin:0 18.97px;">B074</div>
<div class="r" style="left:1938px;top:450px;width:19.5px;height:37px;background:#a2e1d7;"></div>
<div class="t" style="top:457.03px;font-size:22.4px;line-height:22.4px;font-family:'Liberation Sans', sans-serif;color:#2b3030;left:1945.00px;-webkit-text-stroke:0.2px currentColor;transform:scaleY(1.05);transform-origin:0 18.97px;">B071I</div>
<div class="r" style="left:1938px;top:491px;width:17.3px;height:37px;background:#a2e1d7;"></div>
<div class="t" style="top:498.03px;font-size:22.4px;line-height:22.4px;font-family:'Liberation Sans', sans-serif;color:#2b3030;left:1945.00px;-webkit-text-stroke:0.2px currentColor;transform:scaleY(1.05);transform-origin:0 18.97px;">B074</div>
<div class="r" style="left:1938px;top:532px;width:16.6px;height:37px;background:#a2e1d7;"></div>
<div class="t" style="top:539.03px;font-size:22.4px;line-height:22.4px;font-family:'Liberation Sans', sans-serif;color:#2b3030;left:1945.00px;-webkit-text-stroke:0.2px currentColor;transform:scaleY(1.05);transform-origin:0 18.97px;">B00C</div>
<div class="t" style="top:705.56px;font-size:22.5px;line-height:22.5px;font-family:'Liberation Mono', monospace;color:#858585;right:1587.50px;text-align:right;transform:scaleY(1.08);transform-origin:0 17.24px;-webkit-text-stroke:0.25px currentColor;">1</div>
<div class="t" style="top:704.13px;font-size:23px;line-height:23px;font-family:'Liberation Sans', sans-serif;color:#2b3030;left:443.50px;-webkit-text-stroke:0.2px currentColor;transform:scaleY(1.05);transform-origin:0 19.47px;">R_XsIUODlniv0lMu5</div>
<div class="t" style="top:705.56px;font-size:22.5px;line-height:22.5px;font-family:'Liberation Mono', monospace;color:#2b3030;left:742.80px;transform:scaleY(1.08);transform-origin:0 17.24px;-webkit-text-stroke:0.25px currentColor;">2020-10-03</div>
<div class="t" style="top:705.56px;font-size:22.5px;line-height:22.5px;font-family:'Liberation Mono', monospace;color:#2b3030;right:690.20px;text-align:right;transform:scaleY(1.08);transform-origin:0 17.24px;-webkit-text-stroke:0.25px currentColor;">89</div>
<div class="t" style="top:705.56px;font-size:22.5px;line-height:22.5px;font-family:'Liberation Mono', monospace;color:#2b3030;right:391.40px;text-align:right;transform:scaleY(1.08);transform-origin:0 17.24px;-webkit-text-stroke:0.25px currentColor;">1</div>
<div class="t" style="top:704.13px;font-size:23px;line-height:23px;font-family:'Liberation Sans', sans-serif;color:#2b3030;left:1638.50px;-webkit-text-stroke:0.2px currentColor;transform:scaleY(1.05);transform-origin:0 19.47px;">MN</div>
<div class="t" style="top:704.13px;font-size:23px;line-height:23px;font-family:'Liberation Sans', sans-serif;color:#2b3030;left:1937.50px;-webkit-text-stroke:0.2px currentColor;transform:scaleY(1.05);transform-origin:0 19.47px;">B00MX</div>
<div class="r" style="left:354px;top:738px;width:73px;height:1px;background:#f8f8f8;"></div>
<div class="t" style="top:750.36px;font-size:22.5px;line-height:22.5px;font-family:'Liberation Mono', monospace;color:#858585;right:1587.50px;text-align:right;transform:scaleY(1.08);transform-origin:0 17.24px;-webkit-text-stroke:0.25px currentColor;">2</div>
<div class="t" style="top:748.93px;font-size:23px;line-height:23px;font-family:'Liberation Sans', sans-serif;color:#2b3030;left:443.50px;-webkit-text-stroke:0.2px currentColor;transform:scaleY(1.05);transform-origin:0 19.47px;">R_XsIUODlniv0lMu5</div>
<div class="t" style="top:750.36px;font-size:22.5px;line-height:22.5px;font-family:'Liberation Mono', monospace;color:#2b3030;left:742.80px;transform:scaleY(1.08);transform-origin:0 17.24px;-webkit-text-stroke:0.25px currentColor;">2020-10-06</div>
<div class="t" style="top:750.36px;font-size:22.5px;line-height:22.5px;font-family:'Liberation Mono', monospace;color:#2b3030;right:690.20px;text-align:right;transform:scaleY(1.08);transform-origin:0 17.24px;-webkit-text-stroke:0.25px currentColor;">20.49</div>
<div class="t" style="top:750.36px;font-size:22.5px;line-height:22.5px;font-family:'Liberation Mono', monospace;color:#2b3030;right:391.40px;text-align:right;transform:scaleY(1.08);transform-origin:0 17.24px;-webkit-text-stroke:0.25px currentColor;">2</div>
<div class="t" style="top:748.93px;font-size:23px;line-height:23px;font-family:'Liberation Sans', sans-serif;color:#2b3030;left:1638.50px;-webkit-text-stroke:0.2px currentColor;transform:scaleY(1.05);transform-origin:0 19.47px;">MN</div>
<div class="t" style="top:748.93px;font-size:23px;line-height:23px;font-family:'Liberation Sans', sans-serif;color:#2b3030;left:1937.50px;-webkit-text-stroke:0.2px currentColor;transform:scaleY(1.05);transform-origin:0 19.47px;">B07J5</div>
<div class="r" style="left:354px;top:783px;width:73px;height:1px;background:#f8f8f8;"></div>
<div class="t" style="top:795.16px;font-size:22.5px;line-height:22.5px;font-family:'Liberation Mono', monospace;color:#858585;right:1587.50px;text-align:right;transform:scaleY(1.08);transform-origin:0 17.24px;-webkit-text-stroke:0.25px currentColor;">3</div>
<div class="t" style="top:793.73px;font-size:23px;line-height:23px;font-family:'Liberation Sans', sans-serif;color:#2b3030;left:443.50px;-webkit-text-stroke:0.2px currentColor;transform:scaleY(1.05);transform-origin:0 19.47px;">R_XsIUODlniv0lMu5</div>
<div class="t" style="top:795.16px;font-size:22.5px;line-height:22.5px;font-family:'Liberation Mono', monospace;color:#2b3030;left:742.80px;transform:scaleY(1.08);transform-origin:0 17.24px;-webkit-text-stroke:0.25px currentColor;">2020-10-08</div>
<div class="t" style="top:795.16px;font-size:22.5px;line-height:22.5px;font-family:'Liberation Mono', monospace;color:#2b3030;right:690.20px;text-align:right;transform:scaleY(1.08);transform-origin:0 17.24px;-webkit-text-stroke:0.25px currentColor;">9.89</div>
<div class="t" style="top:795.16px;font-size:22.5px;line-height:22.5px;font-family:'Liberation Mono', monospace;color:#2b3030;right:391.40px;text-align:right;transform:scaleY(1.08);transform-origin:0 17.24px;-webkit-text-stroke:0.25px currentColor;">2</div>
<div class="t" style="top:793.73px;font-size:23px;line-height:23px;font-family:'Liberation Sans', sans-serif;color:#2b3030;left:1638.50px;-webkit-text-stroke:0.2px currentColor;transform:scaleY(1.05);transform-origin:0 19.47px;">MN</div>
<div class="t" style="top:793.73px;font-size:23px;line-height:23px;font-family:'Liberation Sans', sans-serif;color:#2b3030;left:1937.50px;-webkit-text-stroke:0.2px currentColor;transform:scaleY(1.05);transform-origin:0 19.47px;">0634C</div>
<div class="r" style="left:354px;top:827px;width:73px;height:1px;background:#f8f8f8;"></div>
<div class="t" style="top:839.96px;font-size:22.5px;line-height:22.5px;font-family:'Liberation Mono', monospace;color:#858585;right:1587.50px;text-align:right;transform:scaleY(1.08);transform-origin:0 17.24px;-webkit-text-stroke:0.25px currentColor;">4</div>
<div class="t" style="top:838.53px;font-size:23px;line-height:23px;font-family:'Liberation Sans', sans-serif;color:#2b3030;left:443.50px;-webkit-text-stroke:0.2px currentColor;transform:scaleY(1.05);transform-origin:0 19.47px;">R_XsIUODlniv0lMu5</div>
<div class="t" style="top:839.96px;font-size:22.5px;line-height:22.5px;font-family:'Liberation Mono', monospace;color:#2b3030;left:742.80px;transform:scaleY(1.08);transform-origin:0 17.24px;-webkit-text-stroke:0.25px currentColor;">2020-10-15</div>
<div class="t" style="top:839.96px;font-size:22.5px;line-height:22.5px;font-family:'Liberation Mono', monospace;color:#2b3030;right:690.20px;text-align:right;transform:scaleY(1.08);transform-origin:0 17.24px;-webkit-text-stroke:0.25px currentColor;">2.41</div>
<div class="t" style="top:839.96px;font-size:22.5px;line-height:22.5px;font-family:'Liberation Mono', monospace;color:#2b3030;right:391.40px;text-align:right;transform:scaleY(1.08);transform-origin:0 17.24px;-webkit-text-stroke:0.25px currentColor;">1</div>
<div class="t" style="top:838.53px;font-size:23px;line-height:23px;font-family:'Liberation Sans', sans-serif;color:#2b3030;left:1638.50px;-webkit-text-stroke:0.2px currentColor;transform:scaleY(1.05);transform-origin:0 19.47px;">MN</div>
<div class="t" style="top:838.53px;font-size:23px;line-height:23px;font-family:'Liberation Sans', sans-serif;color:#2b3030;left:1937.50px;-webkit-text-stroke:0.2px currentColor;transform:scaleY(1.05);transform-origin:0 19.47px;">B08FY</div>
<div class="r" style="left:354px;top:872px;width:73px;height:1px;background:#f8f8f8;"></div>
<div class="t" style="top:884.76px;font-size:22.5px;line-height:22.5px;font-family:'Liberation Mono', monospace;color:#858585;right:1587.50px;text-align:right;transform:scaleY(1.08);transform-origin:0 17.24px;-webkit-text-stroke:0.25px currentColor;">5</div>
<div class="t" style="top:883.33px;font-size:23px;line-height:23px;font-family:'Liberation Sans', sans-serif;color:#2b3030;left:443.50px;-webkit-text-stroke:0.2px currentColor;transform:scaleY(1.05);transform-origin:0 19.47px;">R_XsIUODlniv0lMu5</div>
<div class="t" style="top:884.76px;font-size:22.5px;line-height:22.5px;font-family:'Liberation Mono', monospace;color:#2b3030;left:742.80px;transform:scaleY(1.08);transform-origin:0 17.24px;-webkit-text-stroke:0.25px currentColor;">2020-10-15</div>
<div class="t" style="top:884.76px;font-size:22.5px;line-height:22.5px;font-family:'Liberation Mono', monospace;color:#2b3030;right:690.20px;text-align:right;transform:scaleY(1.08);transform-origin:0 17.24px;-webkit-text-stroke:0.25px currentColor;">3.45</div>
<div class="t" style="top:884.76px;font-size:22.5px;line-height:22.5px;font-family:'Liberation Mono', monospace;color:#2b3030;right:391.40px;text-align:right;transform:scaleY(1.08);transform-origin:0 17.24px;-webkit-text-stroke:0.25px currentColor;">1</div>
<div class="t" style="top:883.33px;font-size:23px;line-height:23px;font-family:'Liberation Sans', sans-serif;color:#2b3030;left:1638.50px;-webkit-text-stroke:0.2px currentColor;transform:scaleY(1.05);transform-origin:0 19.47px;">MN</div>
<div class="t" style="top:883.33px;font-size:23px;line-height:23px;font-family:'Liberation Sans', sans-serif;color:#2b3030;left:1937.50px;-webkit-text-stroke:0.2px currentColor;transform:scaleY(1.05);transform-origin:0 19.47px;">B08G2</div>
<div class="r" style="left:354px;top:917px;width:73px;height:1px;background:#f8f8f8;"></div>
<div class="t" style="top:929.56px;font-size:22.5px;line-height:22.5px;font-family:'Liberation Mono', monospace;color:#858585;right:1587.50px;text-align:right;transform:scaleY(1.08);transform-origin:0 17.24px;-webkit-text-stroke:0.25px currentColor;">6</div>
<div class="t" style="top:928.13px;font-size:23px;line-height:23px;font-family:'Liberation Sans', sans-serif;color:#2b3030;left:443.50px;-webkit-text-stroke:0.2px currentColor;transform:scaleY(1.05);transform-origin:0 19.47px;">R_XsIUODlniv0lMu5</div>
<div class="t" style="top:929.56px;font-size:22.5px;line-height:22.5px;font-family:'Liberation Mono', monospace;color:#2b3030;left:742.80px;transform:scaleY(1.08);transform-origin:0 17.24px;-webkit-text-stroke:0.25px currentColor;">2020-10-15</div>
<div class="t" style="top:929.56px;font-size:22.5px;line-height:22.5px;font-family:'Liberation Mono', monospace;color:#2b3030;right:690.20px;text-align:right;transform:scaleY(1.08);transform-origin:0 17.24px;-webkit-text-stroke:0.25px currentColor;">3.99</div>
<div class="t" style="top:929.56px;font-size:22.5px;line-height:22.5px;font-family:'Liberation Mono', monospace;color:#2b3030;right:391.40px;text-align:right;transform:scaleY(1.08);transform-origin:0 17.24px;-webkit-text-stroke:0.25px currentColor;">1</div>
<div class="t" style="top:928.13px;font-size:23px;line-height:23px;font-family:'Liberation Sans', sans-serif;color:#2b3030;left:1638.50px;-webkit-text-stroke:0.2px currentColor;transform:scaleY(1.05);transform-origin:0 19.47px;">MN</div>
<div class="t" style="top:928.13px;font-size:23px;line-height:23px;font-family:'Liberation Sans', sans-serif;color:#2b3030;left:1937.50px;-webkit-text-stroke:0.2px currentColor;transform:scaleY(1.05);transform-origin:0 19.47px;">B08H1</div>
<div class="r" style="left:354px;top:962px;width:73px;height:1px;background:#f8f8f8;"></div>
<div class="t" style="top:974.36px;font-size:22.5px;line-height:22.5px;font-family:'Liberation Mono', monospace;color:#858585;right:1587.50px;text-align:right;transform:scaleY(1.08);transform-origin:0 17.24px;-webkit-text-stroke:0.25px currentColor;">7</div>
<div class="t" style="top:972.93px;font-size:23px;line-height:23px;font-family:'Liberation Sans', sans-serif;color:#2b3030;left:443.50px;-webkit-text-stroke:0.2px currentColor;transform:scaleY(1.05);transform-origin:0 19.47px;">R_XsIUODlniv0lMu5</div>
<div class="t" style="top:974.36px;font-size:22.5px;line-height:22.5px;font-family:'Liberation Mono', monospace;color:#2b3030;left:742.80px;transform:scaleY(1.08);transform-origin:0 17.24px;-webkit-text-stroke:0.25px currentColor;">2020-10-15</div>
<div class="t" style="top:974.36px;font-size:22.5px;line-height:22.5px;font-family:'Liberation Mono', monospace;color:#2b3030;right:690.20px;text-align:right;transform:scaleY(1.08);transform-origin:0 17.24px;-webkit-text-stroke:0.25px currentColor;">5.8</div>
<div class="t" style="top:974.36px;font-size:22.5px;line-height:22.5px;font-family:'Liberation Mono', monospace;color:#2b3030;right:391.40px;text-align:right;transform:scaleY(1.08);transform-origin:0 17.24px;-webkit-text-stroke:0.25px currentColor;">1</div>
<div class="t" style="top:972.93px;font-size:23px;line-height:23px;font-family:'Liberation Sans', sans-serif;color:#2b3030;left:1638.50px;-webkit-text-stroke:0.2px currentColor;transform:scaleY(1.05);transform-origin:0 19.47px;">MN</div>
<div class="t" style="top:972.93px;font-size:23px;line-height:23px;font-family:'Liberation Sans', sans-serif;color:#2b3030;left:1937.50px;-webkit-text-stroke:0.2px currentColor;transform:scaleY(1.05);transform-origin:0 19.47px;">B08GZ</div>
<div class="r" style="left:354px;top:1007px;width:73px;height:1px;background:#f8f8f8;"></div>
<div class="t" style="top:1019.16px;font-size:22.5px;line-height:22.5px;font-family:'Liberation Mono', monospace;color:#858585;right:1587.50px;text-align:right;transform:scaleY(1.08);transform-origin:0 17.24px;-webkit-text-stroke:0.25px currentColor;">8</div>
<div class="t" style="top:1017.73px;font-size:23px;line-height:23px;font-family:'Liberation Sans', sans-serif;color:#2b3030;left:443.50px;-webkit-text-stroke:0.2px currentColor;transform:scaleY(1.05);transform-origin:0 19.47px;">R_XsIUODlniv0lMu5</div>
<div class="t" style="top:1019.16px;font-size:22.5px;line-height:22.5px;font-family:'Liberation Mono', monospace;color:#2b3030;left:742.80px;transform:scaleY(1.08);transform-origin:0 17.24px;-webkit-text-stroke:0.25px currentColor;">2020-10-24</div>
<div class="t" style="top:1019.16px;font-size:22.5px;line-height:22.5px;font-family:'Liberation Mono', monospace;color:#2b3030;right:690.20px;text-align:right;transform:scaleY(1.08);transform-origin:0 17.24px;-webkit-text-stroke:0.25px currentColor;">2.99</div>
<div class="t" style="top:1019.16px;font-size:22.5px;line-height:22.5px;font-family:'Liberation Mono', monospace;color:#2b3030;right:391.40px;text-align:right;transform:scaleY(1.08);transform-origin:0 17.24px;-webkit-text-stroke:0.25px currentColor;">1</div>
<div class="t" style="top:1017.73px;font-size:23px;line-height:23px;font-family:'Liberation Sans', sans-serif;color:#2b3030;left:1638.50px;-webkit-text-stroke:0.2px currentColor;transform:scaleY(1.05);transform-origin:0 19.47px;">MN</div>
<div class="t" style="top:1017.73px;font-size:23px;line-height:23px;font-family:'Liberation Sans', sans-serif;color:#2b3030;left:1937.50px;-webkit-text-stroke:0.2px currentColor;transform:scaleY(1.05);transform-origin:0 19.47px;">08497</div>
<div class="r" style="left:354px;top:1051px;width:73px;height:1px;background:#f8f8f8;"></div>
<div class="t" style="top:1063.96px;font-size:22.5px;line-height:22.5px;font-family:'Liberation Mono', monospace;color:#858585;right:1587.50px;text-align:right;transform:scaleY(1.08);transform-origin:0 17.24px;-webkit-text-stroke:0.25px currentColor;">9</div>
<div class="t" style="top:1062.53px;font-size:23px;line-height:23px;font-family:'Liberation Sans', sans-serif;color:#2b3030;left:443.50px;-webkit-text-stroke:0.2px currentColor;transform:scaleY(1.05);transform-origin:0 19.47px;">R_XsIUODlniv0lMu5</div>
<div class="t" style="top:1063.96px;font-size:22.5px;line-height:22.5px;font-family:'Liberation Mono', monospace;color:#2b3030;left:742.80px;transform:scaleY(1.08);transform-origin:0 17.24px;-webkit-text-stroke:0.25px currentColor;">2020-10-24</div>
<div class="t" style="top:1063.96px;font-size:22.5px;line-height:22.5px;font-family:'Liberation Mono', monospace;color:#2b3030;right:690.20px;text-align:right;transform:scaleY(1.08);transform-origin:0 17.24px;-webkit-text-stroke:0.25px currentColor;">7.95</div>
<div class="t" style="top:1063.96px;font-size:22.5px;line-height:22.5px;font-family:'Liberation Mono', monospace;color:#2b3030;right:391.40px;text-align:right;transform:scaleY(1.08);transform-origin:0 17.24px;-webkit-text-stroke:0.25px currentColor;">1</div>
<div class="t" style="top:1062.53px;font-size:23px;line-height:23px;font-family:'Liberation Sans', sans-serif;color:#2b3030;left:1638.50px;-webkit-text-stroke:0.2px currentColor;transform:scaleY(1.05);transform-origin:0 19.47px;">MN</div>
<div class="t" style="top:1062.53px;font-size:23px;line-height:23px;font-family:'Liberation Sans', sans-serif;color:#2b3030;left:1937.50px;-webkit-text-stroke:0.2px currentColor;transform:scaleY(1.05);transform-origin:0 19.47px;">08497</div>
<div class="r" style="left:354px;top:1096px;width:73px;height:1px;background:#f8f8f8;"></div>
<div class="t" style="top:1108.76px;font-size:22.5px;line-height:22.5px;font-family:'Liberation Mono', monospace;color:#858585;right:1587.50px;text-align:right;transform:scaleY(1.08);transform-origin:0 17.24px;-webkit-text-stroke:0.25px currentColor;">10</div>
<div class="t" style="top:1107.33px;font-size:23px;line-height:23px;font-family:'Liberation Sans', sans-serif;color:#2b3030;left:443.50px;-webkit-text-stroke:0.2px currentColor;transform:scaleY(1.05);transform-origin:0 19.47px;">R_XsIUODlniv0lMu5</div>
<div class="t" style="top:1108.76px;font-size:22.5px;line-height:22.5px;font-family:'Liberation Mono', monospace;color:#2b3030;left:742.80px;transform:scaleY(1.08);transform-origin:0 17.24px;-webkit-text-stroke:0.25px currentColor;">2020-10-24</div>
<div class="t" style="top:1108.76px;font-size:22.5px;line-height:22.5px;font-family:'Liberation Mono', monospace;color:#2b3030;right:690.20px;text-align:right;transform:scaleY(1.08);transform-origin:0 17.24px;-webkit-text-stroke:0.25px currentColor;">7.95</div>
<div class="t" style="top:1108.76px;font-size:22.5px;line-height:22.5px;font-family:'Liberation Mono', monospace;color:#2b3030;right:391.40px;text-align:right;transform:scaleY(1.08);transform-origin:0 17.24px;-webkit-text-stroke:0.25px currentColor;">1</div>
<div class="t" style="top:1107.33px;font-size:23px;line-height:23px;font-family:'Liberation Sans', sans-serif;color:#2b3030;left:1638.50px;-webkit-text-stroke:0.2px currentColor;transform:scaleY(1.05);transform-origin:0 19.47px;">MN</div>
<div class="t" style="top:1107.33px;font-size:23px;line-height:23px;font-family:'Liberation Sans', sans-serif;color:#2b3030;left:1937.50px;-webkit-text-stroke:0.2px currentColor;transform:scaleY(1.05);transform-origin:0 19.47px;">08497</div>
<div class="t" style="top:1151.93px;font-size:23px;line-height:23px;font-family:'Liberation Sans', sans-serif;color:#363d3d;left:369.00px;-webkit-text-stroke:0.2px currentColor;transform:scaleY(1.05);transform-origin:0 19.47px;">250 of 1.851M rows</div>
</div></body></html>
